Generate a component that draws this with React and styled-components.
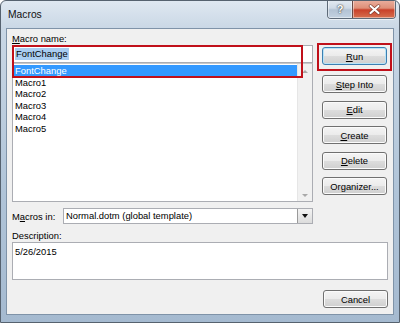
import React from "react";
import styled, { createGlobalStyle } from "styled-components";

const GlobalStyle = createGlobalStyle`
  html, body { margin: 0; padding: 0; background: #ffffff; }
  body { font-family: "Liberation Sans", Arial, sans-serif; }
  #root { width: 400px; height: 323px; }
`;

const Window = styled.div`
  width: 400px;
  height: 323px;
  box-sizing: border-box;
  border: 1px solid #56626f;
  border-radius: 6px 6px 0 0;
  background: linear-gradient(to bottom, #dfe8f1 0px, #c9d7e5 28px, #b0c4d8 60%, #a5bad0 100%);
  display: flex;
  flex-direction: column;
  overflow: hidden;
`;

const TitleBar = styled.div`
  height: 27px;
  flex: none;
  display: flex;
  align-items: flex-start;
  padding-left: 7px;
  padding-right: 3px;
`;

const Title = styled.div`
  font-size: 10.3px;
  line-height: 27px;
  color: #111;
  flex: 1;
`;

const CaptionGroup = styled.div`
  display: flex;
  margin-top: -1px;
  border: 1px solid #5d6a78;
  border-top: none;
  border-radius: 0 0 4px 4px;
  overflow: hidden;
  box-shadow: 0 1px 0 rgba(255,255,255,0.6);
`;

const CaptionButton = styled.div`
  width: ${(p) => p.$w}px;
  height: 18px;
  display: flex;
  align-items: center;
  justify-content: center;
  font-weight: bold;
  font-size: 11px;
  color: #fff;
  text-shadow: 0 0 2px #3a3a3a, 0 0 1px #3a3a3a;
  background: ${(p) =>
    p.$close
      ? "linear-gradient(to bottom, #eab0a0 0%, #de8f78 45%, #c9412a 55%, #d6704f 100%)"
      : "linear-gradient(to bottom, #e4ebf2 0%, #cfdae6 45%, #b3c3d4 55%, #c3d2e1 100%)"};
  border-left: ${(p) => (p.$close ? "1px solid #6b4a46" : "none")};
  box-shadow: inset 0 0 0 1px rgba(255,255,255,0.45);
`;

const Client = styled.div`
  flex: 1;
  margin: 0 5px 7px 5px;
  border: 1px solid #7f93a8;
  background: #f0f0f0;
  padding: 3px 5px 0 5px;
  display: flex;
  flex-direction: column;
`;

const TopSection = styled.div`
  display: flex;
  gap: 9px;
`;

const LeftColumn = styled.div`
  width: 301px;
  display: flex;
  flex-direction: column;
  position: relative;
`;

const Label = styled.div`
  font-size: 9.4px;
  line-height: 13px;
  color: #000;
  width: ${(p) => (p.$w ? `${p.$w}px` : "auto")};
  flex: none;
  u { text-decoration: underline; text-underline-offset: 1px; }
`;

const NameInput = styled.div`
  height: 18px;
  box-sizing: border-box;
  border: 1px solid #abadb3;
  background: #fff;
  display: flex;
  align-items: center;
  padding-left: 2px;
`;

const SelectedText = styled.span`
  font-size: 9.4px;
  line-height: 12px;
  background: #a9cdf1;
  color: #000;
  padding: 0 1px;
`;

const ListBox = styled.div`
  height: 139px;
  box-sizing: border-box;
  border: 1px solid #abadb3;
  border-top-color: #c8c8c8;
  background: #fff;
  display: flex;
`;

const ListItems = styled.div`
  flex: 1;
  padding-top: 1px;
`;

const ListItem = styled.div`
  font-size: 9.4px;
  height: 11.5px;
  line-height: 12px;
  padding-left: 2px;
  color: ${(p) => (p.$selected ? "#fff" : "#000")};
  background: ${(p) => (p.$selected ? "#3399ff" : "transparent")};
`;

const ScrollBar = styled.div`
  width: 14px;
  background: #f1f1f1;
  border-left: 1px solid #e6e6e6;
  display: flex;
  flex-direction: column;
  justify-content: space-between;
  align-items: center;
  padding: 6px 0 4px;
`;

const ScrollArrow = styled.div`
  width: 0;
  height: 0;
  border-left: 3px solid transparent;
  border-right: 3px solid transparent;
  ${(p) => (p.$up ? "border-bottom: 3px solid #a9a9a9;" : "border-top: 3px solid #a9a9a9;")}
`;

const Highlight = styled.div`
  position: absolute;
  left: ${(p) => p.$l}px;
  top: ${(p) => p.$t}px;
  width: ${(p) => p.$w}px;
  height: ${(p) => p.$h}px;
  border: 2px solid #c0101a;
  box-sizing: border-box;
  pointer-events: none;
`;

const ButtonColumn = styled.div`
  width: 65px;
  padding-top: 15px;
  display: flex;
  flex-direction: column;
  gap: 7.5px;
`;

const Button = styled.div`
  position: relative;
  width: 65px;
  height: 18px;
  box-sizing: border-box;
  border: 1px solid ${(p) => (p.$default ? "#3c7fb1" : "#707070")};
  border-radius: 3px;
  background: linear-gradient(to bottom, #f4f4f4 0%, #ebebeb 50%, #dddddd 50%, #cfcfcf 100%);
  box-shadow: inset 0 0 0 1px ${(p) => (p.$default ? "#b9e3f7" : "#fbfbfb")};
  display: flex;
  align-items: center;
  justify-content: center;
  font-size: 9.4px;
  color: #000;
  margin-bottom: ${(p) => (p.$default ? "2.5px" : "0")};
  margin-left: ${(p) => (p.$right ? "auto" : "0")};
  flex: none;
  u { text-decoration: underline; text-underline-offset: 1px; }
`;

const MacrosInRow = styled.div`
  display: flex;
  align-items: center;
  margin-top: 6px;
`;

const Select = styled.div`
  width: 250px;
  height: 16px;
  box-sizing: border-box;
  border: 1px solid #abadb3;
  background: #fff;
  display: flex;
  align-items: stretch;
`;

const SelectText = styled.div`
  flex: 1;
  font-size: 9.4px;
  line-height: 14px;
  padding-left: 2px;
`;

const DropButton = styled.div`
  width: 14px;
  background: linear-gradient(to bottom, #f3f3f3, #dcdcdc);
  border-left: 1px solid #9a9a9a;
  display: flex;
  align-items: center;
  justify-content: center;
`;

const DownTriangle = styled.div`
  width: 0;
  height: 0;
  border-left: 3.5px solid transparent;
  border-right: 3.5px solid transparent;
  border-top: 4px solid #111;
`;

const DescLabel = styled(Label)`
  margin-top: 5px;
`;

const DescBox = styled.div`
  height: 38px;
  box-sizing: border-box;
  border: 1px solid #abadb3;
  background: #fff;
  font-size: 9.4px;
  line-height: 12px;
  padding: 3px 2px;
`;

const Footer = styled.div`
  display: flex;
  margin-top: 10px;
`;

const CloseGlyph = () => (
  <svg width="13" height="11" viewBox="0 0 13 11">
    <path d="M2.5 2 L10.5 9 M10.5 2 L2.5 9" stroke="#7a3a2e" strokeWidth="3.4" strokeLinecap="round" />
    <path d="M2.5 2 L10.5 9 M10.5 2 L2.5 9" stroke="#ffffff" strokeWidth="2.2" strokeLinecap="round" />
  </svg>
);

export default function App() {
  const items = ["Macro1", "Macro2", "Macro3", "Macro4", "Macro5"];
  return (
    <>
      <GlobalStyle />
      <Window>
        <TitleBar>
          <Title>Macros</Title>
          <CaptionGroup>
            <CaptionButton $w={24}>?</CaptionButton>
            <CaptionButton $w={42} $close>
              <CloseGlyph />
            </CaptionButton>
          </CaptionGroup>
        </TitleBar>
        <Client>
          <TopSection>
            <LeftColumn>
              <Label>
                <u>M</u>acro name:
              </Label>
              <NameInput>
                <SelectedText>FontChange</SelectedText>
              </NameInput>
              <ListBox>
                <ListItems>
                  <ListItem $selected>FontChange</ListItem>
                  {items.map((m) => (
                    <ListItem key={m}>{m}</ListItem>
                  ))}
                </ListItems>
                <ScrollBar>
                  <ScrollArrow $up />
                  <ScrollArrow />
                </ScrollBar>
              </ListBox>
              <Highlight $l={0} $t={13} $w={291} $h={33} />
            </LeftColumn>
            <ButtonColumn>
              <Button $default>
                <u>R</u>un
                <Highlight $l={-6} $t={-5} $w={75} $h={28} />
              </Button>
              <Button>
                <u>S</u>tep Into
              </Button>
              <Button>
                <u>E</u>dit
              </Button>
              <Button>
                <u>C</u>reate
              </Button>
              <Button>
                <u>D</u>elete
              </Button>
              <Button>Organizer...</Button>
            </ButtonColumn>
          </TopSection>
          <MacrosInRow>
            <Label $w={51}>
              M<u>a</u>cros in:
            </Label>
            <Select>
              <SelectText>Normal.dotm (global template)</SelectText>
              <DropButton>
                <DownTriangle />
              </DropButton>
            </Select>
          </MacrosInRow>
          <DescLabel>Description:</DescLabel>
          <DescBox>5/26/2015</DescBox>
          <Footer>
            <Button $right>Cancel</Button>
          </Footer>
        </Client>
      </Window>
    </>
  );
}
